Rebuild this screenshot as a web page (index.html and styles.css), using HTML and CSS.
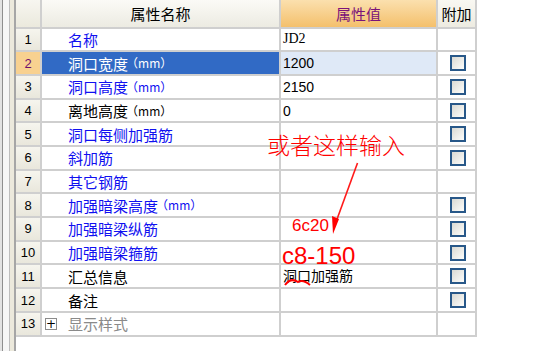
FILE: index.html
```html
<!DOCTYPE html>
<html>
<head>
<meta charset="utf-8">
<link rel="stylesheet" href="styles.css">
</head>
<body>
<div class="page">
  <div class="strip"></div>
  <div class="grid">
    <div class="h-num"></div>
    <div class="h-name">属性名称</div>
    <div class="h-val">属性值</div>
    <div class="h-att">附加</div>

    <div class="num">1</div><div class="name blue">名称</div><div class="val serif">JD2</div><div class="att"></div>
    <div class="num sel">2</div><div class="name selname">洞口宽度<span class="unit">（mm）</span></div><div class="val selval">1200</div><div class="att"><span class="cb"></span></div>
    <div class="num">3</div><div class="name blue">洞口高度<span class="unit">（mm）</span></div><div class="val">2150</div><div class="att"><span class="cb"></span></div>
    <div class="num">4</div><div class="name">离地高度<span class="unit">（mm）</span></div><div class="val">0</div><div class="att"><span class="cb"></span></div>
    <div class="num">5</div><div class="name blue">洞口每侧加强筋</div><div class="val"></div><div class="att"><span class="cb"></span></div>
    <div class="num">6</div><div class="name blue">斜加筋</div><div class="val"></div><div class="att"><span class="cb"></span></div>
    <div class="num">7</div><div class="name blue">其它钢筋</div><div class="val"></div><div class="att"></div>
    <div class="num">8</div><div class="name blue">加强暗梁高度<span class="unit">（mm）</span></div><div class="val"></div><div class="att"><span class="cb"></span></div>
    <div class="num">9</div><div class="name blue">加强暗梁纵筋</div><div class="val"></div><div class="att"><span class="cb"></span></div>
    <div class="num">10</div><div class="name blue">加强暗梁箍筋</div><div class="val"></div><div class="att"><span class="cb"></span></div>
    <div class="num">11</div><div class="name">汇总信息</div><div class="val">洞口加强筋</div><div class="att"><span class="cb"></span></div>
    <div class="num">12</div><div class="name">备注</div><div class="val"></div><div class="att"><span class="cb"></span></div>
    <div class="num">13</div><div class="name gray"><span class="plus">+</span>显示样式</div><div class="val"></div><div class="att"></div>
  </div>
</div>

<div class="note note-big">或者这样输入</div>
<div class="note note-6c20">6c20</div>
<div class="note note-c8">c8-150</div>
<svg class="marks" width="533" height="351" viewBox="0 0 533 351">
  <line x1="357.5" y1="163" x2="336" y2="222" stroke="#ff1a1a" stroke-width="1.6"/>
  <polygon points="333,234 332,216 339,219" fill="#ff0000"/>
  <path d="M285 285 Q291 277 298 282 Q303 279 310 285" fill="none" stroke="#ff0000" stroke-width="2"/>
</svg>
</body>
</html>
```

FILE: styles.css
```css
html, body {
  margin: 0;
  padding: 0;
  background: #ffffff;
}

.page {
  display: flex;
  height: 351px;
  width: 533px;
  overflow: hidden;
  font-family: "Noto Sans CJK SC", "Liberation Sans", sans-serif;
}

.strip {
  width: 16px;
  flex: none;
  background: linear-gradient(to right,
    #e2e2e2 0, #e2e2e2 2px,
    #8e8e8e 2px, #8e8e8e 3px,
    #f6f6f6 3px, #f6f6f6 9px,
    #bdbdbd 9px, #bdbdbd 10px,
    #ece9dc 10px, #ece9dc 14px,
    #a6a6a6 14px, #a6a6a6 16px);
}

.grid {
  display: grid;
  grid-template-columns: 26px 239px 157px 39px;
  grid-template-rows: 28.6px repeat(13, 23.7px);
  align-self: flex-start;
}

.grid > div {
  box-sizing: border-box;
  border-right: 2px solid #cfcfcf;
  border-bottom: 2px solid #cfcfcf;
  display: flex;
  align-items: center;
  font-size: 15px;
  line-height: 1;
  color: #000000;
  overflow: visible;
  white-space: nowrap;
}

.grid > .h-num,
.grid > .num {
  justify-content: center;
  font-family: "Liberation Sans", sans-serif;
  font-size: 13px;
}

.grid > .h-num {
  background: linear-gradient(#f7f6f0, #ebe9dd);
}

.grid > .h-name {
  justify-content: center;
  background: linear-gradient(#fbfaf6, #ecebe2);
  padding-top: 1px;
}

.grid > .h-val {
  justify-content: center;
  background: linear-gradient(#fbe0ae, #f4c06c);
  color: #7a137a;
  padding-top: 1px;
}

.grid > .h-att {
  justify-content: center;
  background: linear-gradient(#f9f8f2, #edebe1);
  padding-top: 1px;
}

.grid > .num {
  background: linear-gradient(#f6f5ee, #e9e7dc);
}

.grid > .num.sel {
  background: #f8d190;
  color: #6e0f6e;
}

.grid > .name {
  padding-left: 26px;
}

.grid > .blue {
  color: #1010f0;
}

.grid > .gray {
  color: #8a8a8a;
  padding-left: 3px;
}

.grid > .selname {
  background: #316ac5;
  color: #ffffff;
}

.unit {
  font-size: 12px;
  margin-left: -2px;
}

.grid > .val {
  padding-left: 2px;
  font-family: "Liberation Sans", "Noto Sans CJK SC", sans-serif;
  font-size: 14px;
}

.grid > .val.serif {
  font-family: "Liberation Serif", serif;
}

.grid > .selval {
  background: #dfe9f7;
}

.grid > .att {
  justify-content: center;
  padding-left: 3px;
}

.cb {
  display: block;
  width: 16px;
  height: 16px;
  box-sizing: border-box;
  border: 2px solid #285889;
  background: linear-gradient(135deg, #d9d9d3, #fdfdfb);
}

.plus {
  display: inline-flex;
  align-items: center;
  justify-content: center;
  width: 12px;
  height: 12px;
  box-sizing: border-box;
  border: 1px solid #8c8c8c;
  background: #ffffff;
  color: #000000;
  font-family: "DejaVu Sans", sans-serif;
  font-size: 12px;
  margin-right: 11px;
}

.note {
  position: absolute;
  color: #ff0000;
  line-height: 1;
  white-space: nowrap;
}

.note-big {
  left: 267px;
  top: 133px;
  font-family: "Noto Sans CJK SC", sans-serif;
  font-weight: 300;
  font-size: 23px;
}

.note-6c20 {
  left: 292px;
  top: 217px;
  font-family: "Liberation Sans", sans-serif;
  font-size: 17px;
}

.note-c8 {
  left: 282px;
  top: 249px;
  line-height: 0.6;
  font-family: "Liberation Sans", sans-serif;
  font-size: 24px;
}

.marks {
  position: absolute;
  left: 0;
  top: 0;
  pointer-events: none;
}
```
